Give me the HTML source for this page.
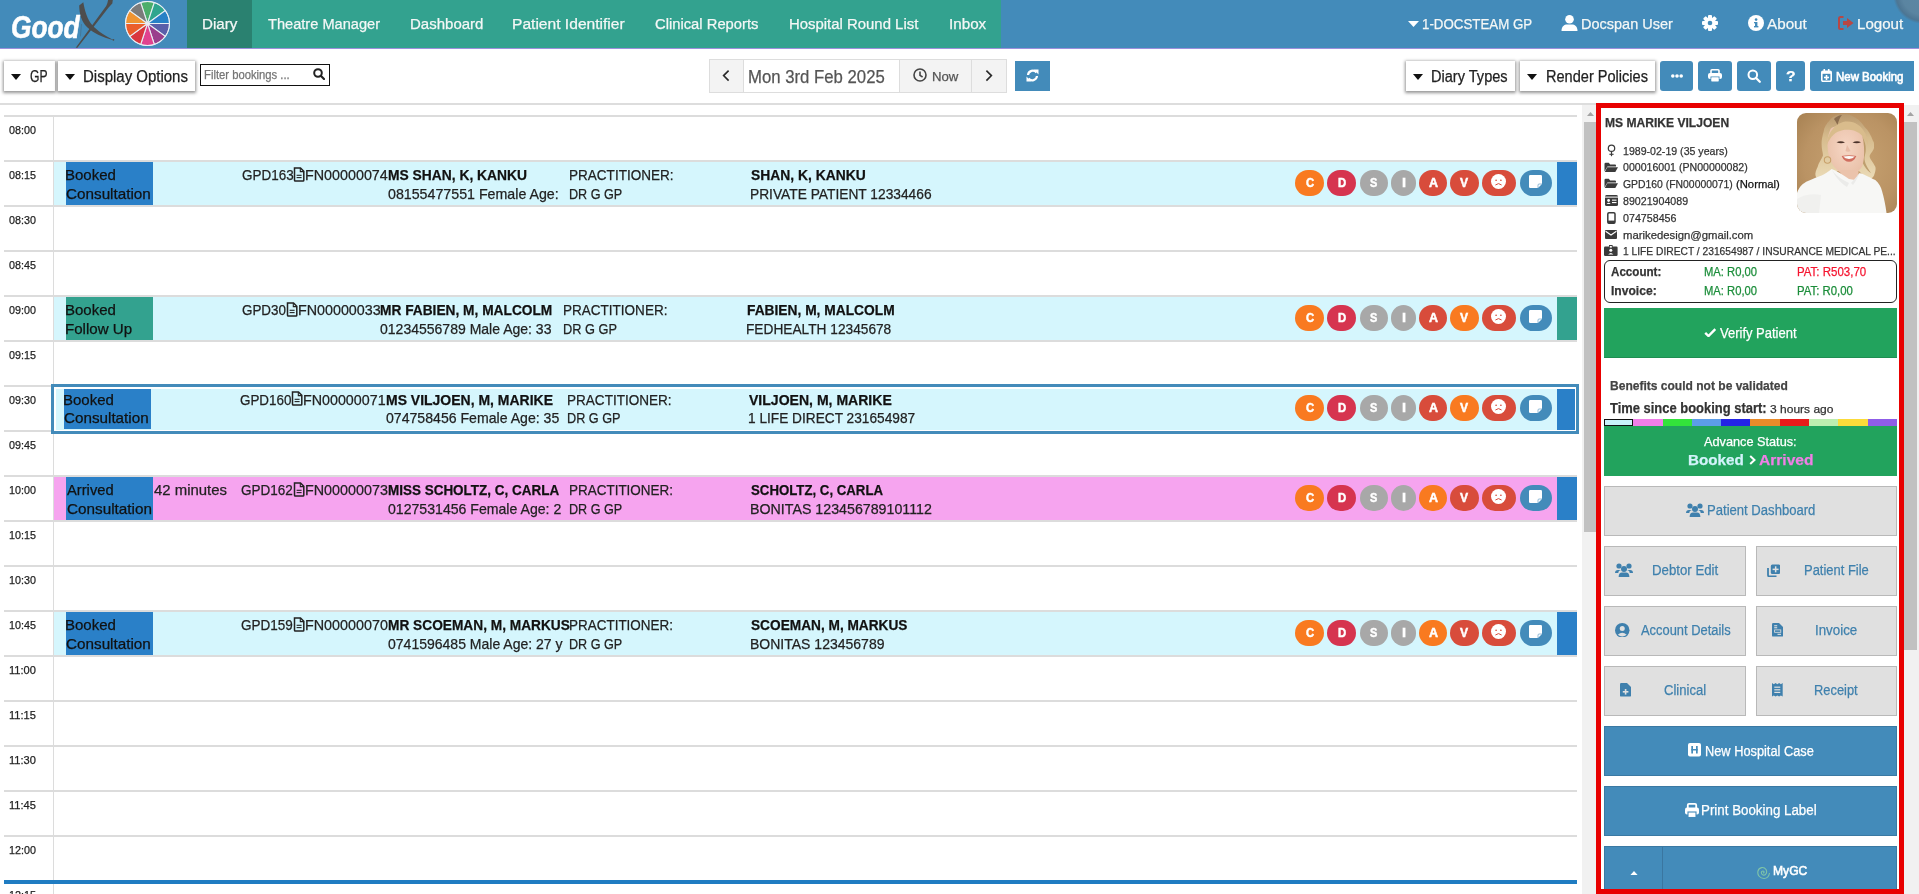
<!DOCTYPE html>
<html><head><meta charset="utf-8"><style>
html,body{margin:0;padding:0;}
body{width:1919px;height:894px;overflow:hidden;position:relative;background:#fff;font-family:"Liberation Sans",sans-serif;}
.b{position:absolute;box-sizing:border-box;}
.t{position:absolute;white-space:nowrap;line-height:normal;transform-origin:0 0;-webkit-text-stroke:0.25px currentColor;}
.i{position:absolute;}

</style></head><body>
<div class="b" style="left:0px;top:0px;width:1919px;height:48px;background:#438bba;"></div>
<div class="b" style="left:0px;top:48px;width:1919px;height:1px;background:#9d90dc;"></div>
<div class="b" style="left:187px;top:0px;width:814px;height:48px;background:#33a28f;"></div>
<div class="b" style="left:187px;top:0px;width:65px;height:48px;background:#2a8170;"></div>
<div class="b" style="left:1893px;top:-36px;width:60px;height:60px;border-radius:50%;background:radial-gradient(circle closest-side, rgba(125,130,135,0.42) 0%, rgba(120,125,130,0.45) 70%, rgba(85,100,115,0.55) 90%, rgba(85,100,115,0) 100%);"></div>
<div class="t" style="left:201.62px;top:15px;font-size:15.5px;color:#f4f7f6;transform:scaleX(0.9769);">Diary</div>
<div class="t" style="left:267.90px;top:15px;font-size:15.5px;color:#f4f7f6;transform:scaleX(0.9424);">Theatre Manager</div>
<div class="t" style="left:409.53px;top:15px;font-size:15.5px;color:#f4f7f6;transform:scaleX(0.9689);">Dashboard</div>
<div class="t" style="left:511.99px;top:15px;font-size:15.5px;color:#f4f7f6;transform:scaleX(1.0059);">Patient Identifier</div>
<div class="t" style="left:655.00px;top:15px;font-size:15.5px;color:#f4f7f6;transform:scaleX(0.9532);">Clinical Reports</div>
<div class="t" style="left:788.74px;top:15px;font-size:15.5px;color:#f4f7f6;transform:scaleX(0.9620);">Hospital Round List</div>
<div class="t" style="left:948.52px;top:15px;font-size:15.5px;color:#f4f7f6;transform:scaleX(0.9820);">Inbox</div>
<svg class="i" style="left:1408px;top:21px;" width="11" height="6" viewBox="0 0 11 6"><polygon points="0,0 11,0 5.5,6" fill="#fff"/></svg>
<div class="t" style="left:1421.54px;top:15px;font-size:15.5px;color:#f4f7f6;transform:scaleX(0.8584);">1-DOCSTEAM GP</div>
<svg class="i" style="left:1561px;top:15px;" width="17" height="16" viewBox="0 0 17 16"><circle cx="8.5" cy="4.3" r="4.3" fill="#fff"/><path d="M0.5 16 C0.5 11 3.5 9.5 6 9.5 L11 9.5 C13.5 9.5 16.5 11 16.5 16 Z" fill="#fff"/></svg>
<div class="t" style="left:1580.66px;top:15px;font-size:15.5px;color:#f4f7f6;transform:scaleX(0.9356);">Docspan User</div>
<svg class="i" style="left:1702px;top:15px;" width="16" height="16" viewBox="0 0 16 16"><g transform="translate(8,8)" fill="#fff"><rect x="-2" y="-8" width="4" height="4" rx="1" transform="rotate(0)"/><rect x="-2" y="-8" width="4" height="4" rx="1" transform="rotate(45)"/><rect x="-2" y="-8" width="4" height="4" rx="1" transform="rotate(90)"/><rect x="-2" y="-8" width="4" height="4" rx="1" transform="rotate(135)"/><rect x="-2" y="-8" width="4" height="4" rx="1" transform="rotate(180)"/><rect x="-2" y="-8" width="4" height="4" rx="1" transform="rotate(225)"/><rect x="-2" y="-8" width="4" height="4" rx="1" transform="rotate(270)"/><rect x="-2" y="-8" width="4" height="4" rx="1" transform="rotate(315)"/><circle r="5.6"/></g><circle cx="8" cy="8" r="2.3" fill="#438bba"/></svg>
<svg class="i" style="left:1748px;top:15px;" width="16" height="16" viewBox="0 0 16 16"><circle cx="8" cy="8" r="8" fill="#fff"/><rect x="7" y="7" width="2.4" height="5" fill="#438bba"/><rect x="6" y="11" width="4.4" height="1.4" fill="#438bba"/><rect x="6" y="7" width="2" height="1.3" fill="#438bba"/><circle cx="8.1" cy="4.6" r="1.3" fill="#438bba"/></svg>
<div class="t" style="left:1767.30px;top:15px;font-size:15.5px;color:#f4f7f6;transform:scaleX(0.9830);">About</div>
<svg class="i" style="left:1838px;top:16px;" width="16" height="14" viewBox="0 0 16 14"><path d="M5.5 1 H2.5 Q1 1 1 2.5 V11.5 Q1 13 2.5 13 H5.5" fill="none" stroke="#b74745" stroke-width="2"/><path d="M5 5 H9 V2 L15.5 7 L9 12 V9 H5 Z" fill="#b74745"/></svg>
<div class="t" style="left:1856.73px;top:15px;font-size:15.5px;color:#f4f7f6;transform:scaleX(0.9745);">Logout</div>
<svg class="i" style="left:60px;top:0px;" width="60" height="48" viewBox="60 0 60 48">
<path d="M83.3,2.2 L79.2,5.6 C79.4,14 81.2,21.5 87.2,27.3 C93,32.8 102,37.2 113.7,40.2 C104,35.2 97.5,31 92.6,25.6 C87.5,19.8 84.8,11 83.3,2.2 Z" fill="#4d4d4d"/><circle cx="113.4" cy="39.8" r="0.9" fill="#4d4d4d"/>
<path d="M108.1,0 L112.8,0 L112.3,3.4 C110.6,5.2 109.2,6.6 108.4,7.8 L77.4,47.8 L75.7,47.8 L106.2,6 C107.2,4 107.8,2 108.1,0 Z" fill="#4d4d4d"/>
<path d="M81.5,24 L80.4,36.5" stroke="#4d4d4d" stroke-width="0.5" opacity="0.6"/>
</svg>
<div class="t" style="left:11.04px;top:10px;font-size:30.5px;color:#fff;font-weight:bold;transform:scaleX(0.8612);font-style:italic;-webkit-text-stroke:0.6px #fff;">Good</div>
<svg class="i" style="left:124.5px;top:0.5px;" width="45" height="45" viewBox="0 0 45 45"><path d="M22.5 22.5 L15.70 1.58 A22 22 0 0 1 29.30 1.58 Z" fill="#4cae6b" stroke="#e8eef4" stroke-width="1.1"/><path d="M22.5 22.5 L29.30 1.58 A22 22 0 0 1 40.30 9.57 Z" fill="#2fa58e" stroke="#e8eef4" stroke-width="1.1"/><path d="M22.5 22.5 L40.30 9.57 A22 22 0 0 1 44.50 22.50 Z" fill="#2781c6" stroke="#e8eef4" stroke-width="1.1"/><path d="M22.5 22.5 L44.50 22.50 A22 22 0 0 1 40.30 35.43 Z" fill="#5a5ea9" stroke="#e8eef4" stroke-width="1.1"/><path d="M22.5 22.5 L40.30 35.43 A22 22 0 0 1 29.30 43.42 Z" fill="#9a3e8c" stroke="#e8eef4" stroke-width="1.1"/><path d="M22.5 22.5 L29.30 43.42 A22 22 0 0 1 15.70 43.42 Z" fill="#e0428f" stroke="#e8eef4" stroke-width="1.1"/><path d="M22.5 22.5 L15.70 43.42 A22 22 0 0 1 4.70 35.43 Z" fill="#d9363f" stroke="#e8eef4" stroke-width="1.1"/><path d="M22.5 22.5 L4.70 35.43 A22 22 0 0 1 0.50 22.50 Z" fill="#eb5e2b" stroke="#e8eef4" stroke-width="1.1"/><path d="M22.5 22.5 L0.50 22.50 A22 22 0 0 1 4.70 9.57 Z" fill="#ef9432" stroke="#e8eef4" stroke-width="1.1"/><path d="M22.5 22.5 L4.70 9.57 A22 22 0 0 1 15.70 1.58 Z" fill="#7b7b7b" stroke="#e8eef4" stroke-width="1.1"/><circle cx="22.5" cy="22.5" r="22" fill="none" stroke="#e8eef4" stroke-width="0.8"/></svg>
<div class="b" style="left:4px;top:61px;width:51px;height:30px;background:#fff;box-shadow:0 1px 3px 1px rgba(0,0,0,0.42);"></div>
<svg class="i" style="left:11px;top:74px;" width="10" height="6" viewBox="0 0 10 6"><polygon points="0,0 10,0 5.0,6" fill="#111"/></svg>
<div class="t" style="left:30.00px;top:68px;font-size:16px;color:#222;transform:scaleX(0.7574);">GP</div>
<div class="b" style="left:58px;top:61px;width:137px;height:30px;background:#fff;box-shadow:0 1px 3px 1px rgba(0,0,0,0.42);"></div>
<svg class="i" style="left:65px;top:74px;" width="10" height="6" viewBox="0 0 10 6"><polygon points="0,0 10,0 5.0,6" fill="#111"/></svg>
<div class="t" style="left:83.06px;top:68px;font-size:16px;color:#222;transform:scaleX(0.9365);">Display Options</div>
<div class="b" style="left:200px;top:64px;width:130px;height:22px;border:1px solid #111;background:#fff;"></div>
<div class="t" style="left:203.80px;top:68px;font-size:12px;color:#757575;transform:scaleX(0.9381);">Filter bookings ...</div>
<svg class="i" style="left:313px;top:68px;" width="12" height="12" viewBox="0 0 12 12"><circle cx="5" cy="5" r="3.8" fill="none" stroke="#222" stroke-width="2"/><line x1="7.8" y1="7.8" x2="11" y2="11" stroke="#222" stroke-width="2.2" stroke-linecap="round"/></svg>
<div class="b" style="left:708.5px;top:59px;width:298.5px;height:34px;background:#f3f3f3;border:1px solid #ddd;"></div>
<div class="b" style="left:743px;top:59px;width:157px;height:34px;background:#fff;border:1px solid #ddd;"></div>
<div class="b" style="left:971px;top:59px;width:1px;height:34px;background:#ddd;"></div>
<svg class="i" style="left:722px;top:69px;" width="8" height="13" viewBox="0 0 8 13"><polyline points="6.6,1.6 1.6,6.6 6.6,11.6" fill="none" stroke="#2a2a2a" stroke-width="1.6"/></svg>
<svg class="i" style="left:985px;top:69px;" width="8" height="13" viewBox="0 0 8 13"><polyline points="1.4,1.6 6.4,6.6 1.4,11.6" fill="none" stroke="#2a2a2a" stroke-width="1.6"/></svg>
<div class="t" style="left:747.50px;top:66px;font-size:18.5px;color:#555;transform:scaleX(0.9047);">Mon 3rd Feb 2025</div>
<svg class="i" style="left:913px;top:68px;" width="14" height="14" viewBox="0 0 14 14"><circle cx="7" cy="7" r="6" fill="none" stroke="#444" stroke-width="1.6"/><polyline points="7,3.5 7,7.3 9.6,9" fill="none" stroke="#444" stroke-width="1.6"/></svg>
<div class="t" style="left:931.99px;top:69px;font-size:13px;color:#555;transform:scaleX(1.0149);">Now</div>
<div class="b" style="left:1015px;top:61px;width:35px;height:30px;background:#438bba;"></div>
<svg class="i" style="left:1026px;top:69px;" width="13" height="13" viewBox="0 0 13 13"><path d="M2 6 A4.8 4.8 0 0 1 10.5 3.5" fill="none" stroke="#fff" stroke-width="2.2"/><polygon points="8,0.5 12.5,0.5 12.5,5.5" fill="#fff"/><path d="M11 7 A4.8 4.8 0 0 1 2.5 9.5" fill="none" stroke="#fff" stroke-width="2.2"/><polygon points="5,12.5 0.5,12.5 0.5,7.5" fill="#fff"/></svg>
<div class="b" style="left:1406px;top:61px;width:109px;height:30px;background:#fff;box-shadow:0 1px 3px 1px rgba(0,0,0,0.42);"></div>
<svg class="i" style="left:1413px;top:74px;" width="10" height="6" viewBox="0 0 10 6"><polygon points="0,0 10,0 5.0,6" fill="#111"/></svg>
<div class="t" style="left:1431.09px;top:68px;font-size:16px;color:#222;transform:scaleX(0.9105);">Diary Types</div>
<div class="b" style="left:1520px;top:61px;width:135px;height:30px;background:#fff;box-shadow:0 1px 3px 1px rgba(0,0,0,0.42);"></div>
<svg class="i" style="left:1527px;top:74px;" width="10" height="6" viewBox="0 0 10 6"><polygon points="0,0 10,0 5.0,6" fill="#111"/></svg>
<div class="t" style="left:1546.09px;top:68px;font-size:16px;color:#222;transform:scaleX(0.9095);">Render Policies</div>
<div class="b" style="left:1660px;top:61px;width:33px;height:30px;background:#438bba;border-radius:3px;"></div>
<svg class="i" style="left:1671px;top:74px;" width="12" height="4" viewBox="0 0 12 4"><circle cx="1.8" cy="2" r="1.8" fill="#fff"/><circle cx="6" cy="2" r="1.8" fill="#fff"/><circle cx="10.2" cy="2" r="1.8" fill="#fff"/></svg>
<div class="b" style="left:1698px;top:61px;width:34px;height:30px;background:#438bba;border-radius:3px;"></div>
<svg class="i" style="left:1708px;top:69px;" width="14" height="13" viewBox="0 0 14 13"><rect x="3" y="0.8" width="8" height="4" rx="1" fill="none" stroke="#fff" stroke-width="1.6"/><rect x="0" y="4" width="14" height="6" rx="2" fill="#fff"/><rect x="3" y="8" width="8" height="4.5" fill="#fff" stroke="#438bba" stroke-width="1"/><rect x="3.5" y="8.5" width="7" height="4" fill="#fff"/></svg>
<div class="b" style="left:1737px;top:61px;width:34px;height:30px;background:#438bba;border-radius:3px;"></div>
<svg class="i" style="left:1747px;top:69px;" width="14" height="14" viewBox="0 0 14 14"><circle cx="5.8" cy="5.8" r="4.3" fill="none" stroke="#fff" stroke-width="2"/><line x1="9" y1="9" x2="12.8" y2="12.8" stroke="#fff" stroke-width="2.2" stroke-linecap="round"/></svg>
<div class="b" style="left:1776px;top:61px;width:29px;height:30px;background:#438bba;border-radius:3px;"></div>
<div class="t" style="left:1786.00px;top:68px;font-size:14px;color:#fff;font-weight:bold;transform:scaleX(1.1250);">?</div>
<div class="b" style="left:1810px;top:61px;width:104px;height:30px;background:#438bba;border-radius:3px 0 0 3px;"></div>
<svg class="i" style="left:1821px;top:69px;" width="11" height="13" viewBox="0 0 11 13"><rect x="0.8" y="2.3" width="9.4" height="10" rx="1.2" fill="none" stroke="#fff" stroke-width="1.6"/><rect x="0.8" y="2.3" width="9.4" height="2.5" fill="#fff"/><rect x="2.5" y="0" width="1.6" height="3" fill="#fff"/><rect x="6.9" y="0" width="1.6" height="3" fill="#fff"/><rect x="4.7" y="6" width="1.6" height="5" fill="#fff"/><rect x="3" y="7.7" width="5" height="1.6" fill="#fff"/></svg>
<div class="t" style="left:1835.72px;top:69px;font-size:13px;color:#fff;transform:scaleX(0.8810);-webkit-text-stroke:0.7px #fff;">New Booking</div>
<div class="b" style="left:0px;top:103px;width:1596px;height:2px;background:#ddd;"></div>
<div class="b" style="left:4px;top:115px;width:1573px;height:2px;background:#dcdcdc;"></div>
<div class="t" style="left:9.40px;top:123px;font-size:11.6px;color:#222;transform:scaleX(0.9277);">08:00</div>
<div class="b" style="left:4px;top:160px;width:1573px;height:2px;background:#dcdcdc;"></div>
<div class="t" style="left:9.40px;top:168px;font-size:11.6px;color:#222;transform:scaleX(0.9277);">08:15</div>
<div class="b" style="left:4px;top:205px;width:1573px;height:2px;background:#dcdcdc;"></div>
<div class="t" style="left:9.40px;top:213px;font-size:11.6px;color:#222;transform:scaleX(0.9277);">08:30</div>
<div class="b" style="left:4px;top:250px;width:1573px;height:2px;background:#dcdcdc;"></div>
<div class="t" style="left:9.40px;top:258px;font-size:11.6px;color:#222;transform:scaleX(0.9277);">08:45</div>
<div class="b" style="left:4px;top:295px;width:1573px;height:2px;background:#dcdcdc;"></div>
<div class="t" style="left:9.40px;top:303px;font-size:11.6px;color:#222;transform:scaleX(0.9277);">09:00</div>
<div class="b" style="left:4px;top:340px;width:1573px;height:2px;background:#dcdcdc;"></div>
<div class="t" style="left:9.40px;top:348px;font-size:11.6px;color:#222;transform:scaleX(0.9277);">09:15</div>
<div class="b" style="left:4px;top:385px;width:1573px;height:2px;background:#dcdcdc;"></div>
<div class="t" style="left:9.40px;top:393px;font-size:11.6px;color:#222;transform:scaleX(0.9277);">09:30</div>
<div class="b" style="left:4px;top:430px;width:1573px;height:2px;background:#dcdcdc;"></div>
<div class="t" style="left:9.40px;top:438px;font-size:11.6px;color:#222;transform:scaleX(0.9277);">09:45</div>
<div class="b" style="left:4px;top:475px;width:1573px;height:2px;background:#dcdcdc;"></div>
<div class="t" style="left:9.40px;top:483px;font-size:11.6px;color:#222;transform:scaleX(0.9277);">10:00</div>
<div class="b" style="left:4px;top:520px;width:1573px;height:2px;background:#dcdcdc;"></div>
<div class="t" style="left:9.40px;top:528px;font-size:11.6px;color:#222;transform:scaleX(0.9277);">10:15</div>
<div class="b" style="left:4px;top:565px;width:1573px;height:2px;background:#dcdcdc;"></div>
<div class="t" style="left:9.40px;top:573px;font-size:11.6px;color:#222;transform:scaleX(0.9277);">10:30</div>
<div class="b" style="left:4px;top:610px;width:1573px;height:2px;background:#dcdcdc;"></div>
<div class="t" style="left:9.40px;top:618px;font-size:11.6px;color:#222;transform:scaleX(0.9277);">10:45</div>
<div class="b" style="left:4px;top:655px;width:1573px;height:2px;background:#dcdcdc;"></div>
<div class="t" style="left:9.40px;top:663px;font-size:11.6px;color:#222;transform:scaleX(0.9565);">11:00</div>
<div class="b" style="left:4px;top:700px;width:1573px;height:2px;background:#dcdcdc;"></div>
<div class="t" style="left:9.40px;top:708px;font-size:11.6px;color:#222;transform:scaleX(0.9565);">11:15</div>
<div class="b" style="left:4px;top:745px;width:1573px;height:2px;background:#dcdcdc;"></div>
<div class="t" style="left:9.40px;top:753px;font-size:11.6px;color:#222;transform:scaleX(0.9565);">11:30</div>
<div class="b" style="left:4px;top:790px;width:1573px;height:2px;background:#dcdcdc;"></div>
<div class="t" style="left:9.40px;top:798px;font-size:11.6px;color:#222;transform:scaleX(0.9565);">11:45</div>
<div class="b" style="left:4px;top:835px;width:1573px;height:2px;background:#dcdcdc;"></div>
<div class="t" style="left:9.40px;top:843px;font-size:11.6px;color:#222;transform:scaleX(0.9277);">12:00</div>
<div class="t" style="left:9.40px;top:888px;font-size:11.6px;color:#222;transform:scaleX(0.9277);">12:15</div>
<div class="b" style="left:53px;top:117px;width:1px;height:777px;background:#dcdcdc;"></div>
<div class="b" style="left:4px;top:880px;width:1573px;height:4px;background:#1f7cc2;"></div>
<div class="b" style="left:54px;top:162px;width:1523px;height:43px;background:#d5f6fd;"></div>
<div class="b" style="left:66px;top:162px;width:87px;height:43px;background:#2a80c8;"></div>
<div class="b" style="left:1557px;top:162px;width:20px;height:43px;background:#2a80c8;"></div>
<div class="t" style="left:65.38px;top:167px;font-size:14.8px;color:#111;transform:scaleX(1.0152);">Booked</div>
<div class="t" style="left:66.40px;top:186px;font-size:14.8px;color:#111;transform:scaleX(1.0314);">Consultation</div>
<div class="t" style="left:241.60px;top:167px;font-size:14.8px;color:#222;transform:scaleX(0.9094);">GPD163</div>
<svg class="i" style="left:293.4px;top:166.6px;" width="12" height="15" viewBox="0 0 12 15"><path d="M1.5 1 H7.5 L10.8 4.3 V13.2 Q10.8 14 10 14 H2.3 Q1.5 14 1.5 13.2 Z" fill="none" stroke="#222" stroke-width="1.5"/><path d="M7.3 1 V4.6 H10.8" fill="none" stroke="#222" stroke-width="1.1"/><line x1="3.6" y1="8.3" x2="8.6" y2="8.3" stroke="#222" stroke-width="1.1"/><line x1="3.6" y1="10.6" x2="8.6" y2="10.6" stroke="#222" stroke-width="1.1"/></svg>
<div class="t" style="left:305.03px;top:167px;font-size:14.8px;color:#222;transform:scaleX(0.9676);">FN00000074</div>
<div class="t" style="left:387.60px;top:167px;font-size:14.8px;color:#111;font-weight:bold;transform:scaleX(0.9345);">MS SHAN, K, KANKU</div>
<div class="t" style="left:387.60px;top:186px;font-size:14.8px;color:#222;transform:scaleX(0.9605);">08155477551 Female Age:</div>
<div class="t" style="left:568.89px;top:167px;font-size:14.8px;color:#222;transform:scaleX(0.9148);">PRACTITIONER:</div>
<div class="t" style="left:568.95px;top:186px;font-size:14.8px;color:#222;transform:scaleX(0.8521);">DR G GP</div>
<div class="t" style="left:751.20px;top:167px;font-size:14.8px;color:#111;font-weight:bold;transform:scaleX(0.9368);">SHAN, K, KANKU</div>
<div class="t" style="left:750.27px;top:186px;font-size:14.8px;color:#222;transform:scaleX(0.9303);">PRIVATE PATIENT 12334466</div>
<div class="b" style="left:1295px;top:170px;width:29px;height:26px;border-radius:13px;background:#f97a20;"></div>
<div class="t" style="left:1305.90px;top:175px;font-size:12.8px;color:#fff;font-weight:bold;transform:scaleX(0.8778);-webkit-text-stroke:0.5px #fff;">C</div>
<div class="b" style="left:1327px;top:170px;width:29px;height:26px;border-radius:13px;background:#d6344f;"></div>
<div class="t" style="left:1338.00px;top:175px;font-size:12.8px;color:#fff;font-weight:bold;transform:scaleX(0.8889);-webkit-text-stroke:0.5px #fff;">D</div>
<div class="b" style="left:1360px;top:170px;width:28px;height:26px;border-radius:13px;background:#a8a8a8;"></div>
<div class="t" style="left:1370.00px;top:175px;font-size:12.8px;color:#fff;font-weight:bold;transform:scaleX(0.8556);-webkit-text-stroke:0.5px #fff;">S</div>
<div class="b" style="left:1391px;top:170px;width:25px;height:26px;border-radius:13px;background:#a8a8a8;"></div>
<div class="t" style="left:1401.80px;top:175px;font-size:12.8px;color:#fff;font-weight:bold;transform:scaleX(1.1333);-webkit-text-stroke:0.5px #fff;">I</div>
<div class="b" style="left:1419px;top:170px;width:28px;height:26px;border-radius:13px;background:#d84c3b;"></div>
<div class="t" style="left:1428.50px;top:175px;font-size:12.8px;color:#fff;font-weight:bold;transform:scaleX(0.9778);-webkit-text-stroke:0.5px #fff;">A</div>
<div class="b" style="left:1450px;top:170px;width:29px;height:26px;border-radius:13px;background:#d84c3b;"></div>
<div class="t" style="left:1460.20px;top:175px;font-size:12.8px;color:#fff;font-weight:bold;transform:scaleX(0.9444);-webkit-text-stroke:0.5px #fff;">V</div>
<div class="b" style="left:1482px;top:170px;width:34px;height:26px;border-radius:13px;background:#d84c3b;"></div>
<svg class="i" style="left:1491.2px;top:174.4px;" width="15" height="15" viewBox="0 0 15 15"><circle cx="7.5" cy="7.5" r="7.5" fill="#fff"/><ellipse cx="5.1" cy="6.3" rx="0.9" ry="0.7" fill="#d84c3b"/><ellipse cx="9.9" cy="6.3" rx="0.9" ry="0.7" fill="#d84c3b"/><path d="M4.4 11 Q7.5 8.2 10.6 11" fill="none" stroke="#d84c3b" stroke-width="1"/></svg>
<div class="b" style="left:1520px;top:170px;width:32px;height:26px;border-radius:13px;background:#438bba;"></div>
<svg class="i" style="left:1529px;top:175px;" width="13" height="13" viewBox="0 0 13 13"><path d="M1.2 0 H11.8 Q13 0 13 1.2 V9 L9 13 H1.2 Q0 13 0 11.8 V1.2 Q0 0 1.2 0 Z" fill="#fff"/><path d="M9 13 V10 Q9 9 10 9 H13" fill="none" stroke="#438bba" stroke-width="0.8" opacity="0.7"/></svg>
<div class="b" style="left:54px;top:297px;width:1523px;height:43px;background:#d5f6fd;"></div>
<div class="b" style="left:66px;top:297px;width:87px;height:43px;background:#33a28f;"></div>
<div class="b" style="left:1557px;top:297px;width:20px;height:43px;background:#33a28f;"></div>
<div class="t" style="left:65.38px;top:302px;font-size:14.8px;color:#111;transform:scaleX(1.0152);">Booked</div>
<div class="t" style="left:65.48px;top:321px;font-size:14.8px;color:#111;transform:scaleX(1.0193);">Follow Up</div>
<div class="t" style="left:241.60px;top:302px;font-size:14.8px;color:#222;transform:scaleX(0.9049);">GPD30</div>
<svg class="i" style="left:286px;top:301.6px;" width="12" height="15" viewBox="0 0 12 15"><path d="M1.5 1 H7.5 L10.8 4.3 V13.2 Q10.8 14 10 14 H2.3 Q1.5 14 1.5 13.2 Z" fill="none" stroke="#222" stroke-width="1.5"/><path d="M7.3 1 V4.6 H10.8" fill="none" stroke="#222" stroke-width="1.1"/><line x1="3.6" y1="8.3" x2="8.6" y2="8.3" stroke="#222" stroke-width="1.1"/><line x1="3.6" y1="10.6" x2="8.6" y2="10.6" stroke="#222" stroke-width="1.1"/></svg>
<div class="t" style="left:297.53px;top:302px;font-size:14.8px;color:#222;transform:scaleX(0.9664);">FN00000033</div>
<div class="t" style="left:380.00px;top:302px;font-size:14.8px;color:#111;font-weight:bold;transform:scaleX(0.9275);">MR FABIEN, M, MALCOLM</div>
<div class="t" style="left:380.00px;top:321px;font-size:14.8px;color:#222;transform:scaleX(0.9472);">01234556789 Male Age: 33</div>
<div class="t" style="left:562.59px;top:302px;font-size:14.8px;color:#222;transform:scaleX(0.9139);">PRACTITIONER:</div>
<div class="t" style="left:562.64px;top:321px;font-size:14.8px;color:#222;transform:scaleX(0.8635);">DR G GP</div>
<div class="t" style="left:746.50px;top:302px;font-size:14.8px;color:#111;font-weight:bold;transform:scaleX(0.9304);">FABIEN, M, MALCOLM</div>
<div class="t" style="left:745.57px;top:321px;font-size:14.8px;color:#222;transform:scaleX(0.9262);">FEDHEALTH 12345678</div>
<div class="b" style="left:1295px;top:305px;width:29px;height:26px;border-radius:13px;background:#f97a20;"></div>
<div class="t" style="left:1305.90px;top:310px;font-size:12.8px;color:#fff;font-weight:bold;transform:scaleX(0.8778);-webkit-text-stroke:0.5px #fff;">C</div>
<div class="b" style="left:1327px;top:305px;width:29px;height:26px;border-radius:13px;background:#d6344f;"></div>
<div class="t" style="left:1338.00px;top:310px;font-size:12.8px;color:#fff;font-weight:bold;transform:scaleX(0.8889);-webkit-text-stroke:0.5px #fff;">D</div>
<div class="b" style="left:1360px;top:305px;width:28px;height:26px;border-radius:13px;background:#a8a8a8;"></div>
<div class="t" style="left:1370.00px;top:310px;font-size:12.8px;color:#fff;font-weight:bold;transform:scaleX(0.8556);-webkit-text-stroke:0.5px #fff;">S</div>
<div class="b" style="left:1391px;top:305px;width:25px;height:26px;border-radius:13px;background:#a8a8a8;"></div>
<div class="t" style="left:1401.80px;top:310px;font-size:12.8px;color:#fff;font-weight:bold;transform:scaleX(1.1333);-webkit-text-stroke:0.5px #fff;">I</div>
<div class="b" style="left:1419px;top:305px;width:28px;height:26px;border-radius:13px;background:#d84c3b;"></div>
<div class="t" style="left:1428.50px;top:310px;font-size:12.8px;color:#fff;font-weight:bold;transform:scaleX(0.9778);-webkit-text-stroke:0.5px #fff;">A</div>
<div class="b" style="left:1450px;top:305px;width:29px;height:26px;border-radius:13px;background:#f97a20;"></div>
<div class="t" style="left:1460.20px;top:310px;font-size:12.8px;color:#fff;font-weight:bold;transform:scaleX(0.9444);-webkit-text-stroke:0.5px #fff;">V</div>
<div class="b" style="left:1482px;top:305px;width:34px;height:26px;border-radius:13px;background:#d84c3b;"></div>
<svg class="i" style="left:1491.2px;top:309.4px;" width="15" height="15" viewBox="0 0 15 15"><circle cx="7.5" cy="7.5" r="7.5" fill="#fff"/><ellipse cx="5.1" cy="6.3" rx="0.9" ry="0.7" fill="#d84c3b"/><ellipse cx="9.9" cy="6.3" rx="0.9" ry="0.7" fill="#d84c3b"/><path d="M4.4 11 Q7.5 8.2 10.6 11" fill="none" stroke="#d84c3b" stroke-width="1"/></svg>
<div class="b" style="left:1520px;top:305px;width:32px;height:26px;border-radius:13px;background:#438bba;"></div>
<svg class="i" style="left:1529px;top:310px;" width="13" height="13" viewBox="0 0 13 13"><path d="M1.2 0 H11.8 Q13 0 13 1.2 V9 L9 13 H1.2 Q0 13 0 11.8 V1.2 Q0 0 1.2 0 Z" fill="#fff"/><path d="M9 13 V10 Q9 9 10 9 H13" fill="none" stroke="#438bba" stroke-width="0.8" opacity="0.7"/></svg>
<div class="b" style="left:51px;top:384px;width:1528px;height:50px;border:3px solid #438bba;background:#fff;"></div>
<div class="b" style="left:56px;top:389px;width:1518px;height:41px;background:#d5f6fd;"></div>
<div class="b" style="left:64px;top:389px;width:87px;height:40px;background:#2a80c8;"></div>
<div class="b" style="left:1557px;top:389px;width:18px;height:41px;background:#2a80c8;"></div>
<div class="t" style="left:63.39px;top:392px;font-size:14.8px;color:#111;transform:scaleX(1.0132);">Booked</div>
<div class="t" style="left:64.40px;top:410px;font-size:14.8px;color:#111;transform:scaleX(1.0289);">Consultation</div>
<div class="t" style="left:239.80px;top:392px;font-size:14.8px;color:#222;transform:scaleX(0.9058);">GPD160</div>
<svg class="i" style="left:291.4px;top:391px;" width="12" height="15" viewBox="0 0 12 15"><path d="M1.5 1 H7.5 L10.8 4.3 V13.2 Q10.8 14 10 14 H2.3 Q1.5 14 1.5 13.2 Z" fill="none" stroke="#222" stroke-width="1.5"/><path d="M7.3 1 V4.6 H10.8" fill="none" stroke="#222" stroke-width="1.1"/><line x1="3.6" y1="8.3" x2="8.6" y2="8.3" stroke="#222" stroke-width="1.1"/><line x1="3.6" y1="10.6" x2="8.6" y2="10.6" stroke="#222" stroke-width="1.1"/></svg>
<div class="t" style="left:302.63px;top:392px;font-size:14.8px;color:#222;transform:scaleX(0.9653);">FN00000071</div>
<div class="t" style="left:385.70px;top:392px;font-size:14.8px;color:#111;font-weight:bold;transform:scaleX(0.9447);">MS VILJOEN, M, MARIKE</div>
<div class="t" style="left:385.70px;top:410px;font-size:14.8px;color:#222;transform:scaleX(0.9528);">074758456 Female Age: 35</div>
<div class="t" style="left:567.08px;top:392px;font-size:14.8px;color:#222;transform:scaleX(0.9157);">PRACTITIONER:</div>
<div class="t" style="left:567.14px;top:410px;font-size:14.8px;color:#222;transform:scaleX(0.8570);">DR G GP</div>
<div class="t" style="left:749.30px;top:392px;font-size:14.8px;color:#111;font-weight:bold;transform:scaleX(0.9490);">VILJOEN, M, MARIKE</div>
<div class="t" style="left:748.38px;top:410px;font-size:14.8px;color:#222;transform:scaleX(0.9248);">1 LIFE DIRECT 231654987</div>
<div class="b" style="left:1295px;top:395px;width:29px;height:26px;border-radius:13px;background:#f97a20;"></div>
<div class="t" style="left:1305.90px;top:400px;font-size:12.8px;color:#fff;font-weight:bold;transform:scaleX(0.8778);-webkit-text-stroke:0.5px #fff;">C</div>
<div class="b" style="left:1327px;top:395px;width:29px;height:26px;border-radius:13px;background:#d6344f;"></div>
<div class="t" style="left:1338.00px;top:400px;font-size:12.8px;color:#fff;font-weight:bold;transform:scaleX(0.8889);-webkit-text-stroke:0.5px #fff;">D</div>
<div class="b" style="left:1360px;top:395px;width:28px;height:26px;border-radius:13px;background:#a8a8a8;"></div>
<div class="t" style="left:1370.00px;top:400px;font-size:12.8px;color:#fff;font-weight:bold;transform:scaleX(0.8556);-webkit-text-stroke:0.5px #fff;">S</div>
<div class="b" style="left:1391px;top:395px;width:25px;height:26px;border-radius:13px;background:#a8a8a8;"></div>
<div class="t" style="left:1401.80px;top:400px;font-size:12.8px;color:#fff;font-weight:bold;transform:scaleX(1.1333);-webkit-text-stroke:0.5px #fff;">I</div>
<div class="b" style="left:1419px;top:395px;width:28px;height:26px;border-radius:13px;background:#d84c3b;"></div>
<div class="t" style="left:1428.50px;top:400px;font-size:12.8px;color:#fff;font-weight:bold;transform:scaleX(0.9778);-webkit-text-stroke:0.5px #fff;">A</div>
<div class="b" style="left:1450px;top:395px;width:29px;height:26px;border-radius:13px;background:#f97a20;"></div>
<div class="t" style="left:1460.20px;top:400px;font-size:12.8px;color:#fff;font-weight:bold;transform:scaleX(0.9444);-webkit-text-stroke:0.5px #fff;">V</div>
<div class="b" style="left:1482px;top:395px;width:34px;height:26px;border-radius:13px;background:#d84c3b;"></div>
<svg class="i" style="left:1491.2px;top:399.4px;" width="15" height="15" viewBox="0 0 15 15"><circle cx="7.5" cy="7.5" r="7.5" fill="#fff"/><ellipse cx="5.1" cy="6.3" rx="0.9" ry="0.7" fill="#d84c3b"/><ellipse cx="9.9" cy="6.3" rx="0.9" ry="0.7" fill="#d84c3b"/><path d="M4.4 11 Q7.5 8.2 10.6 11" fill="none" stroke="#d84c3b" stroke-width="1"/></svg>
<div class="b" style="left:1520px;top:395px;width:32px;height:26px;border-radius:13px;background:#438bba;"></div>
<svg class="i" style="left:1529px;top:400px;" width="13" height="13" viewBox="0 0 13 13"><path d="M1.2 0 H11.8 Q13 0 13 1.2 V9 L9 13 H1.2 Q0 13 0 11.8 V1.2 Q0 0 1.2 0 Z" fill="#fff"/><path d="M9 13 V10 Q9 9 10 9 H13" fill="none" stroke="#438bba" stroke-width="0.8" opacity="0.7"/></svg>
<div class="b" style="left:54px;top:477px;width:1523px;height:43px;background:#f6a4ef;"></div>
<div class="b" style="left:66px;top:477px;width:87px;height:43px;background:#2a80c8;"></div>
<div class="b" style="left:1557px;top:477px;width:20px;height:43px;background:#2a80c8;"></div>
<div class="t" style="left:66.50px;top:482px;font-size:14.8px;color:#111;transform:scaleX(0.9949);">Arrived</div>
<div class="t" style="left:66.50px;top:501px;font-size:14.8px;color:#111;transform:scaleX(1.0338);">Consultation</div>
<div class="t" style="left:153.80px;top:482px;font-size:14.8px;color:#222;transform:scaleX(1.0086);">42 minutes</div>
<div class="t" style="left:241.40px;top:482px;font-size:14.8px;color:#222;transform:scaleX(0.9129);">GPD162</div>
<svg class="i" style="left:293.4px;top:481.6px;" width="12" height="15" viewBox="0 0 12 15"><path d="M1.5 1 H7.5 L10.8 4.3 V13.2 Q10.8 14 10 14 H2.3 Q1.5 14 1.5 13.2 Z" fill="none" stroke="#222" stroke-width="1.5"/><path d="M7.3 1 V4.6 H10.8" fill="none" stroke="#222" stroke-width="1.1"/><line x1="3.6" y1="8.3" x2="8.6" y2="8.3" stroke="#222" stroke-width="1.1"/><line x1="3.6" y1="10.6" x2="8.6" y2="10.6" stroke="#222" stroke-width="1.1"/></svg>
<div class="t" style="left:305.03px;top:482px;font-size:14.8px;color:#222;transform:scaleX(0.9688);">FN00000073</div>
<div class="t" style="left:387.50px;top:482px;font-size:14.8px;color:#111;font-weight:bold;transform:scaleX(0.9103);">MISS SCHOLTZ, C, CARLA</div>
<div class="t" style="left:387.50px;top:501px;font-size:14.8px;color:#222;transform:scaleX(0.9528);">0127531456 Female Age: 2</div>
<div class="t" style="left:568.59px;top:482px;font-size:14.8px;color:#222;transform:scaleX(0.9103);">PRACTITIONER:</div>
<div class="t" style="left:568.65px;top:501px;font-size:14.8px;color:#222;transform:scaleX(0.8521);">DR G GP</div>
<div class="t" style="left:751.40px;top:482px;font-size:14.8px;color:#111;font-weight:bold;transform:scaleX(0.8940);">SCHOLTZ, C, CARLA</div>
<div class="t" style="left:750.44px;top:501px;font-size:14.8px;color:#222;transform:scaleX(0.9613);">BONITAS 123456789101112</div>
<div class="b" style="left:1295px;top:485px;width:29px;height:26px;border-radius:13px;background:#f97a20;"></div>
<div class="t" style="left:1305.90px;top:490px;font-size:12.8px;color:#fff;font-weight:bold;transform:scaleX(0.8778);-webkit-text-stroke:0.5px #fff;">C</div>
<div class="b" style="left:1327px;top:485px;width:29px;height:26px;border-radius:13px;background:#d6344f;"></div>
<div class="t" style="left:1338.00px;top:490px;font-size:12.8px;color:#fff;font-weight:bold;transform:scaleX(0.8889);-webkit-text-stroke:0.5px #fff;">D</div>
<div class="b" style="left:1360px;top:485px;width:28px;height:26px;border-radius:13px;background:#a8a8a8;"></div>
<div class="t" style="left:1370.00px;top:490px;font-size:12.8px;color:#fff;font-weight:bold;transform:scaleX(0.8556);-webkit-text-stroke:0.5px #fff;">S</div>
<div class="b" style="left:1391px;top:485px;width:25px;height:26px;border-radius:13px;background:#a8a8a8;"></div>
<div class="t" style="left:1401.80px;top:490px;font-size:12.8px;color:#fff;font-weight:bold;transform:scaleX(1.1333);-webkit-text-stroke:0.5px #fff;">I</div>
<div class="b" style="left:1419px;top:485px;width:28px;height:26px;border-radius:13px;background:#f97a20;"></div>
<div class="t" style="left:1428.50px;top:490px;font-size:12.8px;color:#fff;font-weight:bold;transform:scaleX(0.9778);-webkit-text-stroke:0.5px #fff;">A</div>
<div class="b" style="left:1450px;top:485px;width:29px;height:26px;border-radius:13px;background:#d84c3b;"></div>
<div class="t" style="left:1460.20px;top:490px;font-size:12.8px;color:#fff;font-weight:bold;transform:scaleX(0.9444);-webkit-text-stroke:0.5px #fff;">V</div>
<div class="b" style="left:1482px;top:485px;width:34px;height:26px;border-radius:13px;background:#d84c3b;"></div>
<svg class="i" style="left:1491.2px;top:489.4px;" width="15" height="15" viewBox="0 0 15 15"><circle cx="7.5" cy="7.5" r="7.5" fill="#fff"/><ellipse cx="5.1" cy="6.3" rx="0.9" ry="0.7" fill="#d84c3b"/><ellipse cx="9.9" cy="6.3" rx="0.9" ry="0.7" fill="#d84c3b"/><path d="M4.4 11 Q7.5 8.2 10.6 11" fill="none" stroke="#d84c3b" stroke-width="1"/></svg>
<div class="b" style="left:1520px;top:485px;width:32px;height:26px;border-radius:13px;background:#438bba;"></div>
<svg class="i" style="left:1529px;top:490px;" width="13" height="13" viewBox="0 0 13 13"><path d="M1.2 0 H11.8 Q13 0 13 1.2 V9 L9 13 H1.2 Q0 13 0 11.8 V1.2 Q0 0 1.2 0 Z" fill="#fff"/><path d="M9 13 V10 Q9 9 10 9 H13" fill="none" stroke="#438bba" stroke-width="0.8" opacity="0.7"/></svg>
<div class="b" style="left:54px;top:612px;width:1523px;height:43px;background:#d5f6fd;"></div>
<div class="b" style="left:66px;top:612px;width:87px;height:43px;background:#2a80c8;"></div>
<div class="b" style="left:1557px;top:612px;width:20px;height:43px;background:#2a80c8;"></div>
<div class="t" style="left:65.38px;top:617px;font-size:14.8px;color:#111;transform:scaleX(1.0152);">Booked</div>
<div class="t" style="left:66.40px;top:636px;font-size:14.8px;color:#111;transform:scaleX(1.0314);">Consultation</div>
<div class="t" style="left:241.40px;top:617px;font-size:14.8px;color:#222;transform:scaleX(0.9129);">GPD159</div>
<svg class="i" style="left:293.4px;top:616.6px;" width="12" height="15" viewBox="0 0 12 15"><path d="M1.5 1 H7.5 L10.8 4.3 V13.2 Q10.8 14 10 14 H2.3 Q1.5 14 1.5 13.2 Z" fill="none" stroke="#222" stroke-width="1.5"/><path d="M7.3 1 V4.6 H10.8" fill="none" stroke="#222" stroke-width="1.1"/><line x1="3.6" y1="8.3" x2="8.6" y2="8.3" stroke="#222" stroke-width="1.1"/><line x1="3.6" y1="10.6" x2="8.6" y2="10.6" stroke="#222" stroke-width="1.1"/></svg>
<div class="t" style="left:305.03px;top:617px;font-size:14.8px;color:#222;transform:scaleX(0.9688);">FN00000070</div>
<div class="t" style="left:387.50px;top:617px;font-size:14.8px;color:#111;font-weight:bold;transform:scaleX(0.9258);">MR SCOEMAN, M, MARKUS</div>
<div class="t" style="left:387.50px;top:636px;font-size:14.8px;color:#222;transform:scaleX(0.9472);">0741596485 Male Age: 27 y</div>
<div class="t" style="left:568.59px;top:617px;font-size:14.8px;color:#222;transform:scaleX(0.9103);">PRACTITIONER:</div>
<div class="t" style="left:568.65px;top:636px;font-size:14.8px;color:#222;transform:scaleX(0.8521);">DR G GP</div>
<div class="t" style="left:751.40px;top:617px;font-size:14.8px;color:#111;font-weight:bold;transform:scaleX(0.9241);">SCOEMAN, M, MARKUS</div>
<div class="t" style="left:750.45px;top:636px;font-size:14.8px;color:#222;transform:scaleX(0.9467);">BONITAS 123456789</div>
<div class="b" style="left:1295px;top:620px;width:29px;height:26px;border-radius:13px;background:#f97a20;"></div>
<div class="t" style="left:1305.90px;top:625px;font-size:12.8px;color:#fff;font-weight:bold;transform:scaleX(0.8778);-webkit-text-stroke:0.5px #fff;">C</div>
<div class="b" style="left:1327px;top:620px;width:29px;height:26px;border-radius:13px;background:#d6344f;"></div>
<div class="t" style="left:1338.00px;top:625px;font-size:12.8px;color:#fff;font-weight:bold;transform:scaleX(0.8889);-webkit-text-stroke:0.5px #fff;">D</div>
<div class="b" style="left:1360px;top:620px;width:28px;height:26px;border-radius:13px;background:#a8a8a8;"></div>
<div class="t" style="left:1370.00px;top:625px;font-size:12.8px;color:#fff;font-weight:bold;transform:scaleX(0.8556);-webkit-text-stroke:0.5px #fff;">S</div>
<div class="b" style="left:1391px;top:620px;width:25px;height:26px;border-radius:13px;background:#a8a8a8;"></div>
<div class="t" style="left:1401.80px;top:625px;font-size:12.8px;color:#fff;font-weight:bold;transform:scaleX(1.1333);-webkit-text-stroke:0.5px #fff;">I</div>
<div class="b" style="left:1419px;top:620px;width:28px;height:26px;border-radius:13px;background:#f97a20;"></div>
<div class="t" style="left:1428.50px;top:625px;font-size:12.8px;color:#fff;font-weight:bold;transform:scaleX(0.9778);-webkit-text-stroke:0.5px #fff;">A</div>
<div class="b" style="left:1450px;top:620px;width:29px;height:26px;border-radius:13px;background:#d84c3b;"></div>
<div class="t" style="left:1460.20px;top:625px;font-size:12.8px;color:#fff;font-weight:bold;transform:scaleX(0.9444);-webkit-text-stroke:0.5px #fff;">V</div>
<div class="b" style="left:1482px;top:620px;width:34px;height:26px;border-radius:13px;background:#d84c3b;"></div>
<svg class="i" style="left:1491.2px;top:624.4px;" width="15" height="15" viewBox="0 0 15 15"><circle cx="7.5" cy="7.5" r="7.5" fill="#fff"/><ellipse cx="5.1" cy="6.3" rx="0.9" ry="0.7" fill="#d84c3b"/><ellipse cx="9.9" cy="6.3" rx="0.9" ry="0.7" fill="#d84c3b"/><path d="M4.4 11 Q7.5 8.2 10.6 11" fill="none" stroke="#d84c3b" stroke-width="1"/></svg>
<div class="b" style="left:1520px;top:620px;width:32px;height:26px;border-radius:13px;background:#438bba;"></div>
<svg class="i" style="left:1529px;top:625px;" width="13" height="13" viewBox="0 0 13 13"><path d="M1.2 0 H11.8 Q13 0 13 1.2 V9 L9 13 H1.2 Q0 13 0 11.8 V1.2 Q0 0 1.2 0 Z" fill="#fff"/><path d="M9 13 V10 Q9 9 10 9 H13" fill="none" stroke="#438bba" stroke-width="0.8" opacity="0.7"/></svg>
<div class="b" style="left:1582px;top:105px;width:14px;height:789px;background:#f1f1f1;"></div>
<svg class="i" style="left:1587px;top:112px;" width="7" height="4" viewBox="0 0 7 4"><polygon points="0,4 7,4 3.5,0" fill="#a3a3a3"/></svg>
<div class="b" style="left:1584px;top:122px;width:12px;height:410px;background:#c1c1c1;"></div>
<div class="b" style="left:1596px;top:103px;width:308px;height:791px;background:#fff;border:5px solid #e80000;border-bottom:none;"></div>
<div class="b" style="left:1596px;top:889px;width:308px;height:5px;background:#e80000;"></div>
<div class="b" style="left:1904px;top:105px;width:15px;height:789px;background:#f1f1f1;"></div>
<svg class="i" style="left:1907px;top:112px;" width="7" height="4" viewBox="0 0 7 4"><polygon points="0,4 7,4 3.5,0" fill="#a3a3a3"/></svg>
<div class="b" style="left:1904px;top:122px;width:13px;height:528px;background:#c1c1c1;"></div>
<div class="t" style="left:1604.70px;top:115px;font-size:12.8px;color:#333;font-weight:bold;transform:scaleX(0.9437);">MS MARIKE VILJOEN</div>
<svg class="i" style="left:1797px;top:113px" width="100" height="100" viewBox="0 0 100 100">
<defs>
<clipPath id="pc"><rect x="0" y="0" width="100" height="100" rx="9"/></clipPath>
<radialGradient id="bg" cx="0.55" cy="0.5" r="0.8"><stop offset="0" stop-color="#c8a372"/><stop offset="0.6" stop-color="#ba9364"/><stop offset="1" stop-color="#a27d4e"/></radialGradient>
<linearGradient id="hr" x1="0" y1="0" x2="0" y2="1"><stop offset="0" stop-color="#b8986e"/><stop offset="0.35" stop-color="#d6bb8c"/><stop offset="1" stop-color="#ecdcb8"/></linearGradient>
<radialGradient id="fc" cx="0.5" cy="0.45" r="0.6"><stop offset="0" stop-color="#f6d6c4"/><stop offset="1" stop-color="#e9c0a8"/></radialGradient>
<filter id="bl" x="-0.2" y="-0.2" width="1.4" height="1.4"><feGaussianBlur stdDeviation="0.6"/></filter>
</defs>
<g clip-path="url(#pc)">
<rect width="100" height="100" fill="url(#bg)"/>
<g filter="url(#bl)">
<path d="M47,1 C40,1 35,4 33,7 C29,11 27,15 26.8,18 C25,24 24.5,28 24.6,31 C24.5,36 26,40 26,42.5 C24,47 21.5,50 20.7,53.7 C19,57 18,60 18.5,62.6 C19,65 21,66.5 22.4,66 C30,63 36,60 40,58 L62,58 C66,62 68,66 69.4,67 C73,66.5 76,65 77,62.6 C78.5,58 79,56 78.3,53.7 C76,49 72,45 72.7,42.5 C75,39 77.5,36 77,33.6 C77,30 77,29 76,28 C74,22 71,17 68,14.5 C64,9 61,6 58,4.5 C54,2 51,1 47,1 Z" fill="url(#hr)"/>
<path d="M62,20 C68,26 70,34 68,42 C66,48 70,54 74,60 C70,58 64,50 64,42 C64,34 63,28 62,20 Z" fill="#b4915f" opacity="0.8"/>
<path d="M37,6 C38.5,8 39.5,10 40.5,12 C41.5,8 43,4 45,2 C41,2.5 39,4 37,6 Z" fill="#8a6c4e"/>
<path d="M33.5,16 C31,22 30,28 30.5,33 C31,40 32,46 36,52 C40,58 46,62.6 52.6,62.6 C58,62 62,58 65,53.7 C67,48 67.5,42 67,34 C66.5,26 65,20 62,16 C58,12.5 54,12 48,12.3 C41,12.5 36,13.5 33.5,16 Z" fill="url(#fc)"/>
<path d="M30,32 C30,22 36,12 46,9 C56,7 64,12 68,20 C70,24 71,28 71,32 C68,24 62,18 54,17 C46,16 38,18 33,26 C31.5,28 30.5,30 30,32 Z" fill="#d9bc8c"/>
<path d="M39.5,29.2 Q44,27 48,29.4 Q44,31 39.5,29.2 Z" fill="#4b3329"/>
<path d="M55.5,29.4 Q60,27 64,29.2 Q60,31 55.5,29.4 Z" fill="#4b3329"/>
<path d="M50,32 L48.5,38 Q51,39.5 53.5,38 Z" fill="#e2b49c" opacity="0.7"/>
<path d="M44.7,43 Q52,41.5 59.3,43 Q57,48.8 52,48.8 Q47,48.8 44.7,43 Z" fill="#d06e5e"/>
<path d="M46.2,43.6 Q52,42.6 57.8,43.6 Q56,46 52,46 Q48,46 46.2,43.6 Z" fill="#fdfbf8"/>
<circle cx="30.5" cy="47" r="3.2" fill="none" stroke="#c7a06a" stroke-width="1.1"/>
<path d="M43.6,57 L61.5,57 L61.5,68 L43.6,68 Z" fill="#ebc3ab"/>
<path d="M0,80 C2,74 6,70 11,68 C16,66 20,64 24.6,62.6 C28,61 31,59 34.7,56 C40,58 46,62 52,66 L58,67 C60,64 61,62 62.6,60 C66,61 72,64 78.3,67 C82,70 84,74 85,78 C87,85 88.5,92 89.5,100 L0,100 Z" fill="#f7f7f5"/>
<path d="M34.7,56 C38,62 44,66 52,70 L50,74 C44,70 38,64 34.7,56 Z" fill="#ebebe9"/>
<path d="M62.6,60 C61,64 59,68 56,72 L54,70 C57,67 60,63 62.6,60 Z" fill="#ebebe9"/>
<path d="M0,86 C6,82 16,80 24,82 L22,100 L0,100 Z" fill="#f0f0ee"/>
</g>
</g>
</svg>
<svg class="i" style="left:1606.5px;top:144px;" width="9" height="13" viewBox="0 0 9 13"><circle cx="4.5" cy="4.2" r="3.2" fill="none" stroke="#3b3b3b" stroke-width="1.25"/><line x1="4.5" y1="7.3" x2="4.5" y2="12.2" stroke="#3b3b3b" stroke-width="1.2"/><line x1="2.4" y1="10.3" x2="6.6" y2="10.3" stroke="#3b3b3b" stroke-width="1.1"/></svg>
<div class="t" style="left:1623.00px;top:145px;font-size:11.3px;color:#333;transform:scaleX(0.9374);">1989-02-19 (35 years)</div>
<svg class="i" style="left:1604px;top:162px;" width="14" height="10" viewBox="0 0 14 10"><path d="M0.5 2 Q0.5 0.8 1.7 0.8 H4.8 L6.2 2.4 H11 Q12 2.4 12 3.4 V4.5 H3.4 L0.5 9.5 Z" fill="#3b3b3b"/><path d="M3.2 5.2 H14 L11.3 10 H0.8 Z" fill="#3b3b3b"/></svg>
<div class="t" style="left:1623.00px;top:161px;font-size:11.3px;color:#333;transform:scaleX(0.9370);">000016001 (PN00000082)</div>
<svg class="i" style="left:1604px;top:178px;" width="14" height="10" viewBox="0 0 14 10"><path d="M0.5 2 Q0.5 0.8 1.7 0.8 H4.8 L6.2 2.4 H11 Q12 2.4 12 3.4 V4.5 H3.4 L0.5 9.5 Z" fill="#3b3b3b"/><path d="M3.2 5.2 H14 L11.3 10 H0.8 Z" fill="#3b3b3b"/></svg>
<div class="t" style="left:1623.00px;top:178px;font-size:11.3px;color:#333;transform:scaleX(0.9201);">GPD160 (FN00000071)</div>
<div class="t" style="left:1736.00px;top:178px;font-size:11.3px;color:#111;transform:scaleX(0.9962);">(Normal)</div>
<svg class="i" style="left:1604.5px;top:195px;" width="13" height="11" viewBox="0 0 13 11"><rect x="0" y="0" width="13" height="11" rx="1.5" fill="#3b3b3b"/><rect x="0" y="1.6" width="13" height="1" fill="#fff"/><circle cx="3.6" cy="5.5" r="1.4" fill="#fff"/><path d="M1.6 9 Q3.6 6.6 5.6 9 Z" fill="#fff"/><rect x="7" y="4.6" width="4.5" height="1.1" fill="#fff"/><rect x="7" y="7" width="4.5" height="1.1" fill="#fff"/></svg>
<div class="t" style="left:1623.00px;top:195px;font-size:11.3px;color:#333;transform:scaleX(0.9415);">89021904089</div>
<svg class="i" style="left:1606.6px;top:211.6px;" width="9" height="12" viewBox="0 0 9 12"><rect x="0.8" y="0.8" width="7.2" height="10.4" rx="1.2" fill="none" stroke="#3b3b3b" stroke-width="1.5"/><rect x="0.8" y="8.6" width="7.2" height="2.6" fill="#3b3b3b"/></svg>
<div class="t" style="left:1623.10px;top:212px;font-size:11.3px;color:#333;transform:scaleX(0.9456);">074758456</div>
<svg class="i" style="left:1605px;top:230.3px;" width="12" height="9" viewBox="0 0 12 9"><rect x="0" y="0" width="12" height="9" rx="1" fill="#3b3b3b"/><polyline points="0.6,1.2 6,5 11.4,1.2" fill="none" stroke="#fff" stroke-width="1.1"/></svg>
<div class="t" style="left:1623.10px;top:229px;font-size:11.3px;color:#333;transform:scaleX(1.0006);">marikedesign@gmail.com</div>
<svg class="i" style="left:1604.4px;top:245.3px;" width="14" height="11" viewBox="0 0 14 11"><rect x="0" y="1.5" width="13.6" height="9.5" rx="1.2" fill="#3b3b3b"/><rect x="5" y="0" width="3.6" height="3" fill="#3b3b3b"/><rect x="5.8" y="1" width="2" height="1.6" fill="#fff"/><circle cx="6.8" cy="5.2" r="1.5" fill="#fff"/><path d="M4.2 9.4 Q6.8 6.4 9.4 9.4 Z" fill="#fff"/></svg>
<div class="t" style="left:1623.10px;top:245px;font-size:11.3px;color:#333;transform:scaleX(0.9066);">1 LIFE DIRECT / 231654987 / INSURANCE MEDICAL PE...</div>
<div class="b" style="left:1604px;top:260px;width:293px;height:43px;border:1.3px solid #222;border-radius:6px;"></div>
<div class="t" style="left:1610.60px;top:264px;font-size:12.9px;color:#333;font-weight:bold;transform:scaleX(0.9017);">Account:</div>
<div class="t" style="left:1703.50px;top:265px;font-size:12.5px;color:#1b8d3a;transform:scaleX(0.8985);">MA: R0,00</div>
<div class="t" style="left:1797.28px;top:265px;font-size:12.5px;color:#f5142f;transform:scaleX(0.9190);">PAT: R503,70</div>
<div class="t" style="left:1610.60px;top:283px;font-size:12.9px;color:#333;font-weight:bold;transform:scaleX(0.9377);">Invoice:</div>
<div class="t" style="left:1703.50px;top:284px;font-size:12.5px;color:#1b8d3a;transform:scaleX(0.8985);">MA: R0,00</div>
<div class="t" style="left:1797.29px;top:284px;font-size:12.5px;color:#1b8d3a;transform:scaleX(0.9103);">PAT: R0,00</div>
<div class="b" style="left:1604px;top:308px;width:293px;height:50px;background:#22a35d;border-bottom:1px solid #1e8e51;"></div>
<svg class="i" style="left:1704.3px;top:327.8px;" width="12.5" height="9.5" viewBox="0 0 12.5 9.5"><polyline points="1.2,4.8 4.5,8 11.3,1.2" fill="none" stroke="#fff" stroke-width="2.4"/></svg>
<div class="t" style="left:1719.80px;top:325px;font-size:14.5px;color:#fff;transform:scaleX(0.8957);">Verify Patient</div>
<div class="t" style="left:1609.70px;top:378px;font-size:13px;color:#444;font-weight:bold;transform:scaleX(0.9256);">Benefits could not be validated</div>
<div class="t" style="left:1609.70px;top:400px;font-size:14.6px;color:#333;font-weight:bold;transform:scaleX(0.8870);">Time since booking start:</div>
<div class="t" style="left:1769.50px;top:402px;font-size:11.6px;color:#333;transform:scaleX(1.0364);">3 hours ago</div>
<div class="b" style="left:1604px;top:419px;width:29px;height:7px;background:#c9f3fb;border:1.3px solid #111;"></div>
<div class="b" style="left:1633px;top:419px;width:30px;height:7px;background:#f07ee9;"></div>
<div class="b" style="left:1663px;top:419px;width:29px;height:7px;background:#33e33b;"></div>
<div class="b" style="left:1692px;top:419px;width:29px;height:7px;background:#5c9de9;"></div>
<div class="b" style="left:1721px;top:419px;width:29px;height:7px;background:#2323e6;"></div>
<div class="b" style="left:1750px;top:419px;width:30px;height:7px;background:#ea8b2a;"></div>
<div class="b" style="left:1780px;top:419px;width:29px;height:7px;background:#e81a1a;"></div>
<div class="b" style="left:1809px;top:419px;width:29px;height:7px;background:#bdeeb0;"></div>
<div class="b" style="left:1838px;top:419px;width:30px;height:7px;background:#fbdb3a;"></div>
<div class="b" style="left:1868px;top:419px;width:29px;height:7px;background:#8f5de8;"></div>
<div class="b" style="left:1604px;top:426px;width:293px;height:50px;background:#22a35d;"></div>
<div class="t" style="left:1704.30px;top:434px;font-size:13px;color:#fff;transform:scaleX(0.9781);">Advance Status:</div>
<div class="t" style="left:1688.02px;top:451px;font-size:15.5px;color:#d2f3fa;font-weight:bold;transform:scaleX(0.9807);">Booked</div>
<svg class="i" style="left:1748.5px;top:455px;" width="7" height="10" viewBox="0 0 7 10"><polyline points="1.2,1 5.5,5 1.2,9" fill="none" stroke="#fff" stroke-width="2"/></svg>
<div class="t" style="left:1759.00px;top:451px;font-size:15.5px;color:#f07fe6;font-weight:bold;transform:scaleX(1.0036);">Arrived</div>
<div class="b" style="left:1604px;top:486px;width:293px;height:50px;background:#e0e0e0;border:1px solid #b9b9b9;"></div>
<svg class="i" style="left:1686.2px;top:502.5px;" width="18" height="14.5" viewBox="0 0 18 14.5"><circle cx="4" cy="3" r="2.6" fill="#3f80ad"/><circle cx="14" cy="3" r="2.6" fill="#3f80ad"/><circle cx="9" cy="6" r="3" fill="#3f80ad"/><path d="M0 10 Q0 7 3 7 H6 Q3 8 3.4 10 Z" fill="#3f80ad"/><path d="M18 10 Q18 7 15 7 H12 Q15 8 14.6 10 Z" fill="#3f80ad"/><path d="M3.6 14.5 Q3.6 9.6 7 9.6 H11 Q14.4 9.6 14.4 14.5 Z" fill="#3f80ad"/></svg>
<div class="t" style="left:1706.77px;top:502px;font-size:14px;color:#3f80ad;transform:scaleX(0.9345);">Patient Dashboard</div>
<div class="b" style="left:1604px;top:546px;width:142px;height:50px;background:#e0e0e0;border:1px solid #b9b9b9;"></div>
<svg class="i" style="left:1615px;top:562.5px;" width="18" height="14.5" viewBox="0 0 18 14.5"><circle cx="4" cy="3" r="2.6" fill="#3f80ad"/><circle cx="14" cy="3" r="2.6" fill="#3f80ad"/><circle cx="9" cy="6" r="3" fill="#3f80ad"/><path d="M0 10 Q0 7 3 7 H6 Q3 8 3.4 10 Z" fill="#3f80ad"/><path d="M18 10 Q18 7 15 7 H12 Q15 8 14.6 10 Z" fill="#3f80ad"/><path d="M3.6 14.5 Q3.6 9.6 7 9.6 H11 Q14.4 9.6 14.4 14.5 Z" fill="#3f80ad"/></svg>
<div class="t" style="left:1652.45px;top:562px;font-size:14px;color:#3f80ad;transform:scaleX(0.9458);">Debtor Edit</div>
<div class="b" style="left:1756px;top:546px;width:141px;height:50px;background:#e0e0e0;border:1px solid #b9b9b9;"></div>
<svg class="i" style="left:1766.7px;top:563.5px;" width="13.5" height="13.5" viewBox="0 0 13.5 13.5"><path d="M1 4 V11 Q1 12.5 2.5 12.5 H9.5" fill="none" stroke="#3f80ad" stroke-width="1.8"/><rect x="3.8" y="0.5" width="9.5" height="9.5" rx="1.5" fill="#3f80ad"/><rect x="7.9" y="2.3" width="1.5" height="6" fill="#e0e0e0"/><rect x="5.6" y="4.6" width="6" height="1.5" fill="#e0e0e0"/></svg>
<div class="t" style="left:1804.48px;top:562px;font-size:14px;color:#3f80ad;transform:scaleX(0.9242);">Patient File</div>
<div class="b" style="left:1604px;top:606px;width:142px;height:50px;background:#e0e0e0;border:1px solid #b9b9b9;"></div>
<svg class="i" style="left:1615.1px;top:622.5px;" width="14.5" height="14.5" viewBox="0 0 14.5 14.5"><circle cx="7.25" cy="7.25" r="7.25" fill="#3f80ad"/><circle cx="7.25" cy="5.5" r="2.5" fill="#e0e0e0"/><path d="M2.8 11.8 Q7.25 7.5 11.7 11.8 Q7.25 15 2.8 11.8 Z" fill="#e0e0e0"/></svg>
<div class="t" style="left:1641.30px;top:622px;font-size:14px;color:#3f80ad;transform:scaleX(0.9212);">Account Details</div>
<div class="b" style="left:1756px;top:606px;width:141px;height:50px;background:#e0e0e0;border:1px solid #b9b9b9;"></div>
<svg class="i" style="left:1771.5px;top:623px;" width="11.3" height="13.6" viewBox="0 0 11.3 13.6"><path d="M1.2 0 H7 L11.3 4.3 V12.4 Q11.3 13.6 10.1 13.6 H1.2 Q0 13.6 0 12.4 V1.2 Q0 0 1.2 0 Z" fill="#3f80ad"/><rect x="2.2" y="6.5" width="7" height="3.2" fill="#e0e0e0"/><rect x="3" y="7.3" width="5.4" height="1.6" fill="#3f80ad"/><rect x="2.2" y="2.2" width="3" height="1.1" fill="#e0e0e0"/><rect x="2.2" y="4.2" width="3" height="1.1" fill="#e0e0e0"/><rect x="5.5" y="10.8" width="3.5" height="1.1" fill="#e0e0e0"/></svg>
<div class="t" style="left:1814.85px;top:622px;font-size:14px;color:#3f80ad;transform:scaleX(0.9524);">Invoice</div>
<div class="b" style="left:1604px;top:666px;width:142px;height:50px;background:#e0e0e0;border:1px solid #b9b9b9;"></div>
<svg class="i" style="left:1620px;top:683px;" width="11" height="13.6" viewBox="0 0 11 13.6"><path d="M1.2 0 H7 L11 4 V12.4 Q11 13.6 9.8 13.6 H1.2 Q0 13.6 0 12.4 V1.2 Q0 0 1.2 0 Z" fill="#3f80ad"/><rect x="4.8" y="6" width="1.6" height="5.6" fill="#e0e0e0"/><rect x="2.8" y="8" width="5.6" height="1.6" fill="#e0e0e0"/></svg>
<div class="t" style="left:1664.00px;top:682px;font-size:14px;color:#3f80ad;transform:scaleX(0.9330);">Clinical</div>
<div class="b" style="left:1756px;top:666px;width:141px;height:50px;background:#e0e0e0;border:1px solid #b9b9b9;"></div>
<svg class="i" style="left:1772px;top:683px;" width="10.7" height="13.6" viewBox="0 0 10.7 13.6"><path d="M0 0 L1.8 1.2 L3.6 0 L5.35 1.2 L7.1 0 L8.9 1.2 L10.7 0 V13.6 L8.9 12.4 L7.1 13.6 L5.35 12.4 L3.6 13.6 L1.8 12.4 L0 13.6 Z" fill="#3f80ad"/><rect x="2.3" y="3.6" width="6" height="1.2" fill="#e0e0e0"/><rect x="2.3" y="6.2" width="6" height="1.2" fill="#e0e0e0"/><rect x="2.3" y="8.8" width="6" height="1.2" fill="#e0e0e0"/></svg>
<div class="t" style="left:1814.08px;top:682px;font-size:14px;color:#3f80ad;transform:scaleX(0.9189);">Receipt</div>
<div class="b" style="left:1604px;top:726px;width:293px;height:50px;background:#438bba;border:1px solid #3a79a3;"></div>
<svg class="i" style="left:1687.6px;top:743px;" width="13" height="13.5" viewBox="0 0 13 13.5"><rect x="0" y="0" width="13" height="13.5" rx="2" fill="#fff"/><rect x="3.3" y="3" width="1.7" height="7.5" fill="#438bba"/><rect x="8" y="3" width="1.7" height="7.5" fill="#438bba"/><rect x="3.3" y="6" width="6.4" height="1.5" fill="#438bba"/></svg>
<div class="t" style="left:1704.69px;top:743px;font-size:14px;color:#fff;transform:scaleX(0.9141);">New Hospital Case</div>
<div class="b" style="left:1604px;top:786px;width:293px;height:50px;background:#438bba;border:1px solid #3a79a3;"></div>
<svg class="i" style="left:1685px;top:802.6px;" width="14" height="15" viewBox="0 0 14 15"><rect x="2.8" y="0.9" width="8.4" height="5" rx="1.2" fill="none" stroke="#fff" stroke-width="1.8"/><rect x="0" y="4.5" width="14" height="7" rx="2" fill="#fff"/><rect x="3" y="9" width="8" height="5.5" fill="#fff" stroke="#438bba" stroke-width="1.1"/></svg>
<div class="t" style="left:1701.45px;top:802px;font-size:14px;color:#fff;transform:scaleX(0.9526);">Print Booking Label</div>
<div class="b" style="left:1604px;top:846px;width:293px;height:43px;background:#438bba;border:1px solid #3a79a3;border-bottom:none;"></div>
<div class="b" style="left:1662px;top:847px;width:1px;height:42px;background:#3a76a0;"></div>
<svg class="i" style="left:1630px;top:870.6px;" width="8" height="4.5" viewBox="0 0 8 4.5"><polygon points="0,4.5 8,4.5 4.0,0" fill="#fff"/></svg>
<svg class="i" style="left:1755.7px;top:864px;" width="14" height="16" viewBox="0 0 14 16"><path d="M7 9 C 8.5 9, 8.5 7, 7 7 C 5 7, 4.5 10, 7 11 C 10 12, 11.5 8, 10 5.5 C 8 2.5, 3 3, 2 7 C 1 11, 4 14.5, 8 14.5 C 11 14.5, 13 12, 13.5 9" fill="none" stroke="#7fc4a8" stroke-width="1.1"/></svg>
<div class="t" style="left:1772.57px;top:863px;font-size:13px;color:#fff;transform:scaleX(0.9311);-webkit-text-stroke:0.6px #fff;">MyGC</div>
</body></html>
